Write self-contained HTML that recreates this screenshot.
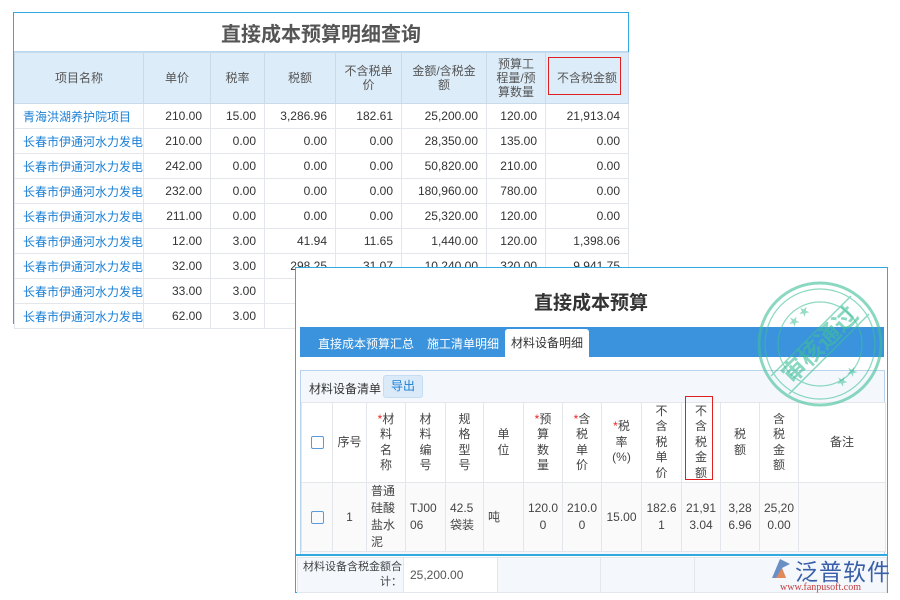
<!DOCTYPE html>
<html><head><meta charset="utf-8"><style>
*{margin:0;padding:0;box-sizing:border-box}
body{width:900px;height:600px;background:#fff;position:relative;overflow:hidden;font-family:"Liberation Sans","Noto Sans CJK SC",sans-serif;font-size:12px;color:#333}
.abs{position:absolute}
table{border-collapse:collapse;table-layout:fixed}
td{border:1px solid #e3e6ea;overflow:hidden;white-space:nowrap}
#t1{position:absolute;left:14px;top:52px;width:614px}
#t1 td{height:25px;text-align:right;padding-right:8px;font-size:12px}
#t1 tr.h td{height:51px;background:#dcecf9;text-align:center;padding:0;color:#555;white-space:normal;line-height:14px;border-color:#c9daea}
#t1 td.n{text-align:left;color:#1a7fd4;padding-left:8px;padding-right:0}
#t2{position:absolute;left:301px;top:402px;width:584px}
#t2 td{text-align:center;white-space:normal;line-height:15.5px;color:#444;font-size:12px;padding:0}
#t2 tr.h td{height:80px;background:#fff}
#t2 tr.d td{height:69px;background:#fafafa;line-height:17px}
.r{color:#e22}
.cb{display:inline-block;width:13px;height:13px;border:1px solid #5a9ad8;border-radius:2px;vertical-align:middle}
#t3 td{height:35px;padding:0}
</style></head><body>
<div class="abs" style="left:13px;top:12px;width:616px;height:312px;border:1px solid #30a8e0;border-bottom:none"></div>
<div class="abs" style="left:14px;top:18px;width:614px;text-align:center;font-size:20px;font-weight:bold;color:#555">直接成本预算明细查询</div>
<div class="abs" style="left:14px;top:51px;width:614px;height:2px;background:#b9d9f2"></div>
<table id="t1">
<colgroup><col style="width:129px"><col style="width:67px"><col style="width:54px"><col style="width:71px"><col style="width:66px"><col style="width:85px"><col style="width:59px"><col style="width:83px"></colgroup>
<tr class="h"><td>项目名称</td><td>单价</td><td>税率</td><td>税额</td><td>不含税单<br>价</td><td>金额/含税金<br>额</td><td>预算工<br>程量/预<br>算数量</td><td>不含税金额</td></tr>
<tr><td class="n">青海洪湖养护院项目</td><td>210.00</td><td>15.00</td><td>3,286.96</td><td>182.61</td><td>25,200.00</td><td>120.00</td><td>21,913.04</td></tr>
<tr><td class="n">长春市伊通河水力发电厂</td><td>210.00</td><td>0.00</td><td>0.00</td><td>0.00</td><td>28,350.00</td><td>135.00</td><td>0.00</td></tr>
<tr><td class="n">长春市伊通河水力发电厂</td><td>242.00</td><td>0.00</td><td>0.00</td><td>0.00</td><td>50,820.00</td><td>210.00</td><td>0.00</td></tr>
<tr><td class="n">长春市伊通河水力发电厂</td><td>232.00</td><td>0.00</td><td>0.00</td><td>0.00</td><td>180,960.00</td><td>780.00</td><td>0.00</td></tr>
<tr><td class="n">长春市伊通河水力发电厂</td><td>211.00</td><td>0.00</td><td>0.00</td><td>0.00</td><td>25,320.00</td><td>120.00</td><td>0.00</td></tr>
<tr><td class="n">长春市伊通河水力发电厂</td><td>12.00</td><td>3.00</td><td>41.94</td><td>11.65</td><td>1,440.00</td><td>120.00</td><td>1,398.06</td></tr>
<tr><td class="n">长春市伊通河水力发电厂</td><td>32.00</td><td>3.00</td><td>298.25</td><td>31.07</td><td>10,240.00</td><td>320.00</td><td>9,941.75</td></tr>
<tr><td class="n">长春市伊通河水力发电厂</td><td>33.00</td><td>3.00</td><td>1</td><td></td><td></td><td></td><td></td></tr>
<tr><td class="n">长春市伊通河水力发电厂</td><td>62.00</td><td>3.00</td><td>3</td><td></td><td></td><td></td><td></td></tr>
</table>
<div class="abs" style="left:548px;top:57px;width:73px;height:38px;border:1.5px solid #e02020"></div>

<div class="abs" style="left:295px;top:267px;width:593px;height:326px;background:#fff;border:1.5px solid #30a8e0"></div>
<div class="abs" style="left:296px;top:288px;width:590px;text-align:center;font-size:19px;font-weight:bold;color:#333">直接成本预算</div>
<div class="abs" style="left:300px;top:327px;width:584px;height:30px;background:#3a93dc"></div>
<div class="abs" style="left:318px;top:335px;color:#fff;font-size:12px">直接成本预算汇总</div>
<div class="abs" style="left:427px;top:335px;color:#fff;font-size:12px">施工清单明细</div>
<div class="abs" style="left:505px;top:329px;width:84px;height:28px;background:#fff;border-radius:3px 3px 0 0;text-align:center;line-height:28px;font-size:12px">材料设备明细</div>
<div class="abs" style="left:300px;top:370px;width:585px;height:186px;border:1px solid #b9d3ec;background:#f4f8fd"></div>
<div class="abs" style="left:309px;top:380px;font-size:12px">材料设备清单</div>
<div class="abs" style="left:383px;top:375px;width:40px;height:23px;background:#dbeaf8;border:1px solid #c5dcf2;border-radius:3px;color:#1a7fd4;text-align:center;line-height:21px">导出</div>
<table id="t2">
<colgroup><col style="width:31px"><col style="width:34px"><col style="width:39px"><col style="width:40px"><col style="width:38px"><col style="width:40px"><col style="width:39px"><col style="width:39px"><col style="width:40px"><col style="width:40px"><col style="width:39px"><col style="width:39px"><col style="width:39px"><col style="width:87px"></colgroup>
<tr class="h"><td><span class="cb"></span></td><td>序号</td><td><span class="r">*</span>材<br>料<br>名<br>称</td><td>材<br>料<br>编<br>号</td><td>规<br>格<br>型<br>号</td><td>单<br>位</td><td><span class="r">*</span>预<br>算<br>数<br>量</td><td><span class="r">*</span>含<br>税<br>单<br>价</td><td><span class="r">*</span>税<br>率<br>(%)</td><td>不<br>含<br>税<br>单<br>价</td><td>不<br>含<br>税<br>金<br>额</td><td>税<br>额</td><td>含<br>税<br>金<br>额</td><td>备注</td></tr>
<tr class="d"><td><span class="cb"></span></td><td>1</td><td style="text-align:left;padding-left:4px">普通<br>硅酸<br>盐水<br>泥</td><td style="text-align:left;padding-left:4px">TJ00<br>06</td><td style="text-align:left;padding-left:4px">42.5<br>袋装</td><td style="text-align:left;padding-left:4px">吨</td><td>120.0<br>0</td><td>210.0<br>0</td><td>15.00</td><td>182.6<br>1</td><td>21,91<br>3.04</td><td>3,28<br>6.96</td><td>25,20<br>0.00</td><td></td></tr>
</table>
<div class="abs" style="left:685px;top:396px;width:28px;height:84px;border:1.5px solid #e02020"></div>
<div class="abs" style="left:296px;top:554px;width:591px;height:2px;background:#30a8e0"></div>
<table id="t3" class="abs" style="left:297px;top:557px;width:589px">
<colgroup><col style="width:106px"><col style="width:94px"><col style="width:103px"><col style="width:94px"><col style="width:192px"></colgroup>
<tr><td style="background:#f4f8fd;white-space:normal;text-align:right;line-height:15px;font-size:11px;padding-right:1px;color:#444">材料设备含税金额合计：</td><td style="padding-left:6px;color:#555">25,200.00</td><td style="background:#f4f8fd"></td><td style="background:#f4f8fd"></td><td style="background:#f4f8fd"></td></tr>
</table>
<svg class="abs" style="left:755px;top:280px" width="130" height="130" viewBox="0 0 130 130">
<g fill="none" stroke="#3fbf98" opacity=".6">
<circle cx="65" cy="64" r="61" stroke-width="3"/><circle cx="65" cy="64" r="55" stroke-width="1.2"/><circle cx="65" cy="64" r="42" stroke-width="1.2"/>
<line x1="16" y1="96" x2="96" y2="16" stroke-width="1.5"/><line x1="34" y1="114" x2="114" y2="34" stroke-width="1.5"/>
</g>
<text x="65" y="73" text-anchor="middle" font-size="24" font-weight="bold" fill="#3fbf98" opacity=".6" transform="rotate(-45 65 65)" font-family="Noto Sans CJK SC">审核通过</text>
<text x="32" y="42" font-size="11" fill="#3fbf98" opacity=".55" transform="rotate(-45 42 38)">★ ★</text>
<text x="80" y="102" font-size="11" fill="#3fbf98" opacity=".55" transform="rotate(-45 90 98)">★ ★</text>
</svg>
<div class="abs" style="left:768px;top:556px;width:22px;height:24px">
<svg width="24" height="26"><path d="M4 22 L12 3 L22 8 L14 12 L18 22 Z" fill="#6a8fc4"/><path d="M8 22 L14 12 L18 22Z" fill="#e08a5a"/></svg></div>
<div class="abs" style="left:795px;top:553px;font-size:23px;color:#3a5fa8;font-family:'Noto Sans CJK SC',sans-serif;letter-spacing:1px">泛普软件</div>
<div class="abs" style="left:780px;top:582px;font-size:10px;color:#c04040;font-family:'Liberation Serif',serif">www.fanpusoft.com</div>
</body></html>
